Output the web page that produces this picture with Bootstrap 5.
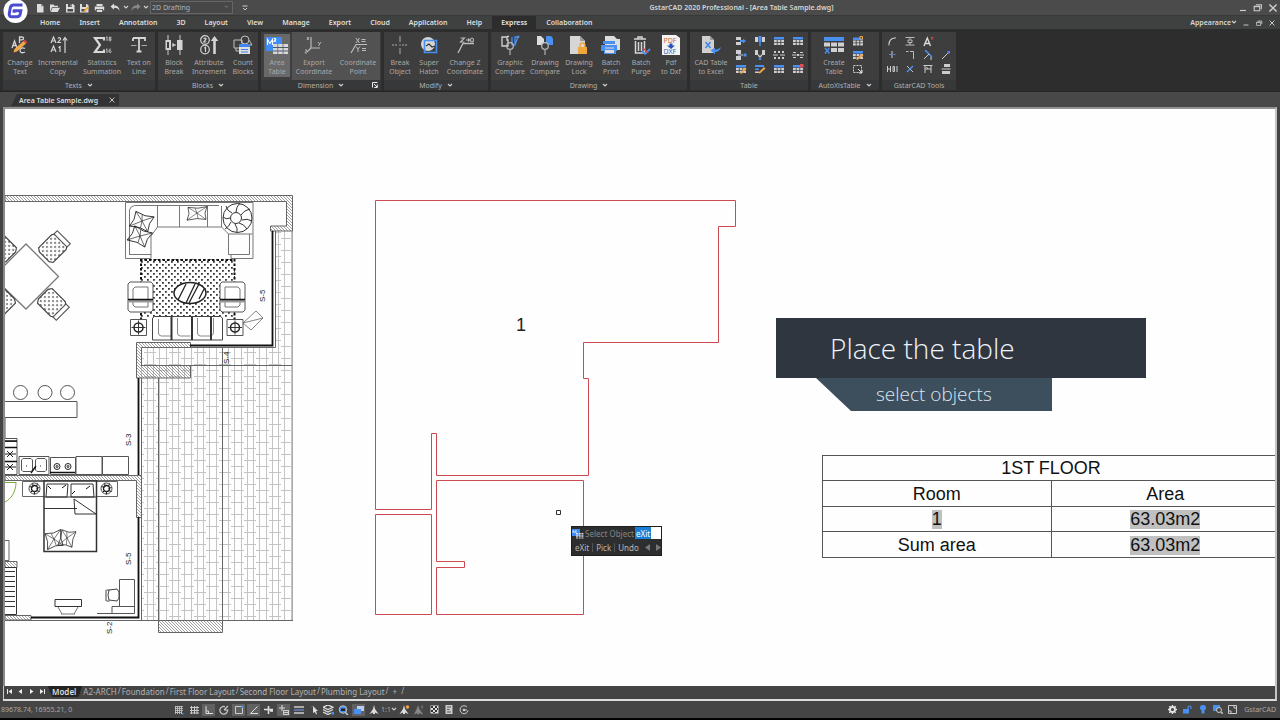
<!DOCTYPE html>
<html lang="en">
<head>
<meta charset="utf-8">
<meta name="viewport" content="width=device-width, initial-scale=1">
<title>GstarCAD 2020 Professional - [Area Table Sample.dwg]</title>
<link rel="stylesheet" href="https://cdn.jsdelivr.net/npm/bootstrap@5.3.0/dist/css/bootstrap.min.css">
<style>
:root{--ui:"Noto Sans","Open Sans",sans-serif;--cad:"Liberation Sans",Arial,sans-serif;--lite:#d6d6d6}
body{height:100vh;overflow:hidden;background:#444;color:var(--lite);font-family:var(--ui);font-size:7px;line-height:9px}
svg{display:block;flex:none}
button,select,input{font-family:inherit;line-height:9px}
.tool{border:0;background:none;padding:0;color:inherit;font-size:7px;display:flex;align-items:center;justify-content:center}
/* title and menu */
.titlebar{height:16px;background:#4a4b4a;border-bottom:1px solid #383838;padding-left:32px}
.logo{left:3px;top:-1px;z-index:3}
.q15{width:15px;height:15px}.q12{width:12px;height:15px}.q8{width:8px;height:15px}
.workspace{width:83px;height:13px;border:1px solid #656565;border-radius:0;background:#474747;color:#b4b4b4;font-size:7px;padding:0 1px;appearance:none}
.ws-box{position:relative}.ws-box svg{position:absolute;right:4px;top:4px;pointer-events:none}
.app-title{font-weight:600;font-size:7px}
.menubar{height:13px;background:#3f4040;padding-left:31px;font-weight:600;gap:1px}
.menubar .nav-link{padding:2px 9px;color:#dedede;height:13px}
.menubar .nav-link.active{background:#2d2d2d;color:#e6e6e6}
/* ribbon */
.ribbon{height:63px;background:#2d2d2d;padding:3px 3px 0;gap:3px;border-bottom:1px solid #262626}
.panel{background:#3e3e3e;height:58px;display:flex;flex-direction:column}
.panel-main{height:48px;padding:0 1px;display:flex}
.panel-cap{height:10px;background:#373839;color:#b0b0b0;display:flex;align-items:center;justify-content:center;gap:5px;position:relative}
.big{flex-direction:column;justify-content:flex-start;gap:3px;padding-top:3px;color:#a8a8a8;text-align:center;white-space:nowrap}
.w28{width:28px}.w30{width:30px}.w32{width:32px}.w34{width:34px}.w36{width:36px}.w40{width:40px}.w44{width:44px}
.chosen{background:linear-gradient(#696969,#696969) center 2px/26px 43px no-repeat}
.hot{background:#525252}
.minis{display:grid;grid-auto-columns:18px;grid-template-rows:repeat(3,14px);grid-auto-flow:row;padding-top:2px}
.minis.c4{grid-template-columns:repeat(4,18px)}
.minis.c4.wide{grid-template-columns:repeat(4,19px)}
.auto-main{padding:0 12px 0 8px}
.launch{position:absolute;right:3px;top:2px}
/* document tabs */
.docbar{height:15px;background:#484848;padding:2px 8px 0 11px}
.doc-tab{height:12px;padding:0 3px 0 8px;gap:10px;background:#333;color:#dcdcdc;font-weight:600;clip-path:polygon(6px 0,100% 0,100% 100%,0 100%)}
/* drawing area */
.frame{margin:0 3px 0 3px;border-right:2px solid #c4c4c4;border-bottom:2px solid #dcdcdc;border-top:2px solid #929292;min-height:0}
.sheet{background:#fefefe;border-left:2px solid #8a8a8a;overflow:hidden;min-height:0}
.plan{width:100%;height:100%;position:absolute;left:0;top:0}
.plan text{font-family:var(--cad)}
.banner{left:771px;top:209px;width:370px}
.banner-a{height:60px;background:#303640;color:#eef4fa;font:300 28px/60px "Open Sans","Noto Sans",sans-serif;padding-left:54px}
.banner-b{height:33px;width:236px;margin-left:40px;background:#3d4e5d;color:#dbe6f0;font:300 19px/33px "Open Sans","Noto Sans",sans-serif;padding-left:60px;clip-path:polygon(0 0,100% 0,100% 100%,35px 100%)}
.area-table{left:817px;top:346px;width:458px;font:18px/24px var(--cad);color:#111;border-collapse:collapse;table-layout:fixed;text-align:center}
.area-table th,.area-table td{border:1px solid #555;padding:0;height:25px;font-weight:400}
.area-table tr:nth-child(even) td,.area-table tr:nth-child(even) th{height:26px}
.fld{background:#c0c0c0;display:inline-block;line-height:19px}
.prompt{left:566px;top:417px;width:91px;background:#2d2e30;border:1px solid #1f1f1f}
.prompt-row{height:14px;font-size:8px;padding-bottom:2px}
.prompt-row label{color:#858585}
.prompt input{width:26px;height:12px;border:0;border-radius:0;padding:0 1px;font-size:8px;color:#fff;background:linear-gradient(90deg,#1a7fd6 16px,#fff 16px)}
.prompt .tool{font-size:8px;color:#b8b8b8;padding:0 3px;border-right:1px solid #555}
.prompt .tool.arrow{border:0;padding:0 3px}
/* layout tabs and status bar */
.layouts{height:13px;background:#444;color:#b2b2b2;font-size:8px;border-left:1px solid #c8c8c8}
.layouts .nav-link{padding:0 1px;height:11px;line-height:11px;color:#b2b2b2;font-size:8px}
.layouts .nav-link.active{background:#242424;color:#ddd;font-weight:600;clip-path:polygon(0 0,100% 0,calc(100% - 4px) 100%,4px 100%);padding:0 6px 0 4px}
.w11{width:11px}
.status{height:19px;background:#454545;border-bottom:2px solid #000;color:#a8a8a8}
.coords{width:171px;padding-left:1px;font-size:7px}
.st{width:15px;height:14px;margin:0}
.st.on{background:#616161;box-shadow:inset 0 0 0 1px #454545}
</style>
</head>
<body class="d-flex flex-column">

<svg width="0" height="0" class="position-absolute" aria-hidden="true">
  <defs>
    <symbol id="chev" viewBox="0 0 6 5"><path d="M1 1l2 2 2-2" fill="none" stroke="#ccc" stroke-width="1.2"/></symbol>
    <symbol id="min" viewBox="0 0 10 10"><path d="M2 7.5h6" stroke="#ccc" stroke-width="1.2"/></symbol>
    <symbol id="max" viewBox="0 0 10 10"><path d="M2 4h5v4H2zM3.500 2.500h5v4" fill="none" stroke="#ccc" stroke-width="1"/><path d="M2 4.200h5" stroke="#ccc"/></symbol>
    <symbol id="cls" viewBox="0 0 10 10"><path d="M2 2l6 6M8 2l-6 6" stroke="#ccc" stroke-width="1.200"/></symbol>
    <symbol id="tbl" viewBox="0 0 12 10"><path d="M1 1h10v2.500H1z" fill="#4a90f0"/><path d="M1 4h2.800v2H1zM4.600 4h2.800v2H4.600zM8.200 4H11v2H8.200zM1 6.800h2.800V9H1zM4.600 6.800h2.800V9H4.600zM8.200 6.800H11V9H8.200z" fill="#cfcfcf"/></symbol>
  </defs>
</svg>

<header class="position-relative">
  <svg class="logo position-absolute" width="25" height="25" viewBox="0 0 25 25" role="img" aria-label="GstarCAD"><circle cx="12.500" cy="12" r="12" fill="#fff"/><path d="M19.500 6H10.500c-2 0-2.800.8-3.200 2.800l-1 5.700c-.4 2.300.5 3.300 2.500 3.300h5.200c1.800 0 2.800-.9 3.200-2.800l.6-3.200h-6.600l-.4 2" fill="none" stroke="#4c4cd0" stroke-width="3"/></svg>
  <div class="titlebar d-flex align-items-center">
    <button class="tool q15" aria-label="New"><svg width="10" height="10" viewBox="0 0 10 10"><path d="M2 1h4l2.500 2.500V9.500H2z" fill="#ddd"/><path d="M6 1v2.500h2.500z" fill="#999"/></svg></button>
    <button class="tool q15" aria-label="Open"><svg width="11" height="10" viewBox="0 0 11 10"><path d="M1 9V1.500h3.500l1 1.200H9V4H3.200z" fill="#ddd"/><path d="M3.600 4.800H11L8.700 9H1.800z" fill="#ddd"/></svg></button>
    <button class="tool q15" aria-label="Save"><svg width="10" height="10" viewBox="0 0 10 10"><path d="M1 1h7l1.500 1.500v7H1z" fill="#ddd"/><path d="M3 1h4v3H3zM2.500 6h5.500v2.500H2.500z" fill="#4a4b4a"/><path d="M5.500 1.500h1v2h-1z" fill="#ddd"/></svg></button>
    <button class="tool q15" aria-label="Save as"><svg width="11" height="10" viewBox="0 0 11 10"><path d="M1 1h7l1.500 1.500v7H1z" fill="#ddd"/><path d="M3 1h4v3H3zM2.500 6h4v2.500h-4z" fill="#4a4b4a"/><path d="M4.500 9l.5-2 4-3.500 1.200 1.300-4 3.700z" fill="#f2a43a"/></svg></button>
    <button class="tool q15" aria-label="Print"><svg width="11" height="10" viewBox="0 0 11 10"><path d="M2.500 1h6v2h-6zM.8 3.500h9.400v3.700H9V6H2v1.200H.8zM2.800 6.700h5.400V9H2.800z" fill="#ddd"/></svg></button>
    <button class="tool q15" aria-label="Undo"><svg width="10" height="9" viewBox="0 0 10 9"><path d="M.5 3.500L4 .5v2c3.500 0 5.500 2 5.500 5.500C8.500 5.500 7 4.800 4 4.800v2z" fill="#ddd"/></svg></button>
    <button class="tool q8" aria-label="Undo list"><svg width="6" height="5"><use href="#chev"/></svg></button>
    <button class="tool q12" aria-label="Redo"><svg width="10" height="9" viewBox="0 0 10 9"><path d="M9.500 3.500L6 .5v2C2.500 2.500.5 4.500.5 8 1.500 5.500 3 4.800 6 4.800v2z" fill="#8a8a8a"/></svg></button>
    <button class="tool q8" aria-label="Redo list"><svg width="6" height="5"><use href="#chev"/></svg></button>
    <div class="ws-box"><select class="workspace d-block" aria-label="Workspace"><option>2D Drafting</option></select><svg width="5" height="4" opacity=".4"><use href="#chev"/></svg></div>
    <button class="tool q15 ms-1" aria-label="Customize toolbar"><svg width="6" height="6" viewBox="0 0 6 6"><path d="M.5 1h5M1 3l2 2 2-2" fill="none" stroke="#ccc"/></svg></button>
    <div class="app-title flex-grow-1 text-center pe-1">GstarCAD 2020 Professional - [Area Table Sample.dwg]</div>
    <button class="tool q15" aria-label="Minimize"><svg width="10" height="10"><use href="#min"/></svg></button>
    <button class="tool q15" aria-label="Restore"><svg width="11" height="11"><use href="#max"/></svg></button>
    <button class="tool q15" aria-label="Close"><svg width="12" height="12"><use href="#cls"/></svg></button>
  </div>
  <nav class="menubar d-flex align-items-center">
    <a class="nav-link" href="#">Home</a><a class="nav-link" href="#">Insert</a><a class="nav-link" href="#">Annotation</a><a class="nav-link" href="#">3D</a><a class="nav-link" href="#">Layout</a><a class="nav-link" href="#">View</a><a class="nav-link" href="#">Manage</a><a class="nav-link" href="#">Export</a><a class="nav-link" href="#">Cloud</a><a class="nav-link" href="#">Application</a><a class="nav-link" href="#">Help</a><a class="nav-link active" href="#" aria-current="page">Express</a><a class="nav-link" href="#">Collaboration</a>
    <button class="tool ms-auto fw-semibold">Appearance<svg width="6" height="5"><use href="#chev"/></svg></button>
    <button class="tool q8 ms-1" aria-label="Minimize drawing"><svg width="8" height="8"><use href="#min"/></svg></button>
    <button class="tool q8 ms-1" aria-label="Restore drawing"><svg width="8" height="8"><use href="#max"/></svg></button>
    <button class="tool q8 ms-1 me-1" aria-label="Close drawing"><svg width="8" height="8"><use href="#cls"/></svg></button>
  </nav>
</header>

<section class="ribbon d-flex" aria-label="Express tools">
  <div class="panel">
    <div class="panel-main">
      <button class="tool big w32"><svg width="20" height="20" viewBox="0 0 20 20"><g fill="none" stroke="#d4d4d4" stroke-width="1.300"><path d="M2 13l2.500-7L7 13M3 10.500h3M9.500 8V2h2.300c2.400 0 2.400 2.800 0 2.800H9.500M15 13.500c-3-1.500-5 0-5 2s2.500 3 5 1.500"/></g><path d="M3.500 17.500l1-3.500 9-8 2.500 2.500-9 8z" fill="#f2a84a"/><path d="M13.500 6l1.500-1.300 2.500 2.500L16 8.500z" fill="#e04040"/></svg><span>Change<br>Text</span></button>
      <button class="tool big w44"><svg width="20" height="20" viewBox="0 0 20 20"><g fill="none" stroke="#d4d4d4" stroke-width="1.200"><path d="M3 8l2.500-6L8 8M4 6h3M3 17l2.500-6L8 17M4 15h3M10 3.500c1-1.500 3-.8 2.500.8L10 7.500h3.200M10.500 12.500l1.500-1V17M17 18V3M14.800 5.500L17 2.500l2.200 3"/></g></svg><span>Incremental<br>Copy</span></button>
      <button class="tool big w44"><svg width="20" height="20" viewBox="0 0 20 20"><path d="M12 5.500V3H3l5 7-5 7h9v-2.500" fill="none" stroke="#d8d8d8" stroke-width="2.200"/><path d="M14 2.500l1-.8V6M18 2a1 1 0 1 0 .1 0M18 4a1 1 0 1 0 .1 0M14 14.500l1-.8V18M18.800 14c-1.300-.5-1.800.8-1.800 2.500 0 1.600 2.200 1.500 2.200.1 0-1.200-1.700-1.300-2.200-.2" fill="none" stroke="#ccc" stroke-width=".9"/></svg><span>Statistics<br>Summation</span></button>
      <button class="tool big w30"><svg width="20" height="20" viewBox="0 0 20 20"><path d="M4 3h12v3M4 6V3M10 3v13M7.500 16.500h5" fill="none" stroke="#d4d4d4" stroke-width="1.800"/><path d="M2 10.500h5.500M12.500 10.500H18" stroke="#aaa"/></svg><span>Text on<br>Line</span></button>
    </div>
    <div class="panel-cap">Texts <svg width="6" height="5"><use href="#chev"/></svg></div>
  </div>

  <div class="panel">
    <div class="panel-main">
      <button class="tool big w30"><svg width="20" height="20" viewBox="0 0 20 20"><path d="M4 0v20M16 0v20M8 10h4" stroke="#ccc"/><path d="M1.500 5H7v10H1.500zM13 5h5.500v10H13z" fill="#d4d4d4"/><path d="M3 7h2v6H3z" fill="#3e3e3e"/><path d="M8.500 7.500v5l2.500-2.500z" fill="#ccc"/></svg><span>Block<br>Break</span></button>
      <button class="tool big w40"><svg width="20" height="20" viewBox="0 0 20 20"><g fill="none" stroke="#d4d4d4" stroke-width="1.200"><circle cx="6" cy="5" r="4.300"/><circle cx="6" cy="14.500" r="4.300"/><path d="M4.800 4c.5-1.500 2.500-1 2.200.2L4.800 7h2.600M5.300 13.200l1.200-.9V17"/></g><path d="M15.500 1l3.800 5h-2.500v13h-2.600V6h-2.500z" fill="#d4d4d4"/></svg><span>Attribute<br>Increment</span></button>
      <button class="tool big w28"><svg width="20" height="20" viewBox="0 0 20 20"><path d="M1 5h8v8H1zM3 13v3h3" fill="none" stroke="#c0c0c0"/><circle cx="12" cy="5" r="4" fill="none" stroke="#c0c0c0"/><path d="M16 5l3 5h-3" fill="none" stroke="#c0c0c0"/><path d="M6 9h11v10H6z" fill="#ddd"/><path d="M6 9h11v3H6zM8 14h7v1H8zM8 16.500h7v1H8z" fill="#3f86ec"/></svg><span>Count<br>Blocks</span></button>
    </div>
    <div class="panel-cap">Blocks <svg width="6" height="5"><use href="#chev"/></svg></div>
  </div>

  <div class="panel">
    <div class="panel-main">
      <button class="tool big w30 chosen" aria-pressed="true"><svg width="22" height="20" viewBox="0 0 22 20"><path d="M0 2h16v14H0z" fill="#3f8cf5"/><path d="M1.500 10V4.500L4 8.500l2.500-4V10M8 4c.5-1 2-.6 1.700.4L8 6.300h2" fill="none" stroke="#fff" stroke-width="1.100"/><path d="M7 9h15v10H7z" fill="#4d5a6e"/><g fill="#d8d8d8"><path d="M7 9h4.500v3H7zM12.200 9h4.500v3h-4.500zM17.400 9H22v3h-4.600zM7 13h4.500v2.500H7zM12.200 13h4.500v2.500h-4.500zM17.400 13H22v2.500h-4.600zM7 16.500h4.500V19H7zM12.200 16.500h4.500V19h-4.500zM17.400 16.500H22V19h-4.600z"/></g></svg><span>Area<br>Table</span></button>
      <button class="tool big w44 hot"><svg width="20" height="20" viewBox="0 0 20 20"><path d="M7 2v11h9M7 13l-4 4" fill="none" stroke="#b8b8b8" stroke-width="1.200"/><path d="M3 2l2 3M5 2L3 5M14 7l1.500 2M17 7l-2.500 4M1 15h2l-2 3h2" fill="none" stroke="#bbb" stroke-width=".9"/></svg><span>Export<br>Coordinate</span></button>
      <button class="tool big w44 hot"><svg width="20" height="20" viewBox="0 0 20 20"><path d="M3 18L8 9.500h11" fill="none" stroke="#bdbdbd" stroke-width="1.200"/><path d="M8 3l3.500 5M11.500 3L8 8M13.500 4.500h4M13.500 6.500h4M8 11.500l2 2.500 2-2.500M10 14v3M14 13.500h4M14 15.500h4" fill="none" stroke="#bdbdbd"/></svg><span>Coordinate<br>Point</span></button>
    </div>
    <div class="panel-cap">Dimension <svg width="6" height="5"><use href="#chev"/></svg><button class="tool launch" aria-label="Dimension settings"><svg width="6" height="6" viewBox="0 0 6 6"><path d="M.5 5.500v-5h5M2 2l3 3M5.300 2.500v3h-3" fill="none" stroke="#eee"/></svg></button></div>
  </div>

  <div class="panel">
    <div class="panel-main">
      <button class="tool big w30"><svg width="20" height="20" viewBox="0 0 20 20"><path d="M10 1v6M10 13v6" stroke="#aaa"/><path d="M2 10h6M12 10h6" stroke="#aaa" stroke-dasharray="2 1"/><path d="M9.500 9.500h1v1h-1z" fill="#ddd"/></svg><span>Break<br>Object</span></button>
      <button class="tool big w28"><svg width="20" height="20" viewBox="0 0 20 20"><circle cx="9" cy="9" r="7" fill="#d6d6d6"/><path d="M5.500 5.500h12v12h-12z" fill="none" stroke="#4a90f0" stroke-width="1.600"/><path d="M7 11l3-2 3 3 3-1" fill="none" stroke="#333" stroke-width="1.100"/></svg><span>Super<br>Hatch</span></button>
      <button class="tool big w44"><svg width="20" height="20" viewBox="0 0 20 20"><path d="M3 18L8 8.500h11" fill="none" stroke="#bdbdbd" stroke-width="1.300"/><path d="M5.500 3h4l-4 4h4M11 5h3M13 3.500L14.500 5 13 6.500M17 3c-2 0-2 4 0 4s2-4 0-4" fill="none" stroke="#bdbdbd" stroke-width="1.100"/></svg><span>Change Z<br>Coordinate</span></button>
    </div>
    <div class="panel-cap">Modify <svg width="6" height="5"><use href="#chev"/></svg></div>
  </div>

  <div class="panel">
    <div class="panel-main">
      <button class="tool big w36"><svg width="20" height="20" viewBox="0 0 20 20"><path d="M2 2h5v3h1v6H2zM7 1.500h2" fill="none" stroke="#d4d4d4" stroke-width="1.300"/><path d="M12 2v8h3l3-8h-3v8" fill="none" stroke="#4a90f0" stroke-width="1.300"/><path d="M17 .7h2.300V3H17z" fill="#4a90f0"/><circle cx="10" cy="11" r="3.300" fill="none" stroke="#bbb" stroke-width="1.200"/><path d="M10 14.500V20" stroke="#999" stroke-width="1.500"/></svg><span>Graphic<br>Compare</span></button>
      <button class="tool big w34"><svg width="20" height="20" viewBox="0 0 20 20"><path d="M2 1h4l3 3v6H2z" fill="#ddd"/><path d="M11 1h5l2 2.500V10h-7z" fill="#4a90f0"/><circle cx="10" cy="11" r="3.300" fill="#3e3e3e" stroke="#bbb" stroke-width="1.200"/><path d="M10 14.500V20" stroke="#999" stroke-width="1.500"/></svg><span>Drawing<br>Compare</span></button>
      <button class="tool big w34"><svg width="20" height="20" viewBox="0 0 20 20"><path d="M1 1h10l5 5v13H1z" fill="#d6d6d6"/><path d="M11 1v5h5z" fill="#999"/><path d="M9 12h9v7H9z" fill="#f0a83c"/><path d="M11 12v-1.500a2.500 2.500 0 0 1 5 0V12" fill="none" stroke="#f0a83c" stroke-width="1.300"/></svg><span>Drawing<br>Lock</span></button>
      <button class="tool big w30"><svg width="20" height="20" viewBox="0 0 20 20"><path d="M4 1h9l3 3h3v11H4z" fill="#ddd"/><path d="M2 6h12v3H2zM0 10h16v6H0zM3 16h12v3H3z" fill="#4a90f0"/><path d="M4 12.500h9v1H4zM4 15h9v3H4z" fill="#ddd"/></svg><span>Batch<br>Print</span></button>
      <button class="tool big w30"><svg width="20" height="20" viewBox="0 0 20 20"><path d="M3 4h12M7 4V2h4v2M4.500 6v12h9V6M7.500 7v9M10.500 7v9" fill="none" stroke="#d6d6d6" stroke-width="1.500"/><path d="M11 16l3 3 5-5" fill="none" stroke="#4a90f0" stroke-width="1.800"/><path d="M12 13l5 5" stroke="#e04848" stroke-width="1.300"/></svg><span>Batch<br>Purge</span></button>
      <button class="tool big w30"><svg width="20" height="20" viewBox="0 0 20 20"><path d="M1 0h14l4 3v17H1z" fill="#f4f4f4"/><text x="2.500" y="8" font-size="7" fill="#d06a3a">PDF</text><path d="M8.500 8.500h3v2H14L10 14l-4-3.500h2.500z" fill="#2a50b8"/><text x="2.500" y="19" font-size="7" fill="#3a64b8">DXF</text></svg><span>Pdf<br>to Dxf</span></button>
    </div>
    <div class="panel-cap">Drawing <svg width="6" height="5"><use href="#chev"/></svg></div>
  </div>

  <div class="panel">
    <div class="panel-main">
      <button class="tool big w40"><svg width="20" height="20" viewBox="0 0 20 20"><path d="M1 1h8l4 4v13H1z" fill="#d0d0d0"/><path d="M9 1v4h4z" fill="#999"/><path d="M4.500 7l5 6M9.500 7l-5 6" stroke="#3f86ec" stroke-width="1.500"/><path d="M20 12c-1 4-4 5-6 5v2.200L9.500 15.500 14 12.500v2c2 0 4-.5 6-2.500z" fill="#4a90f0"/></svg><span>CAD Table<br>to Excel</span></button>
      <div class="minis c4 wide">
        <button class="tool" aria-label="Insert column left"><svg width="12" height="10" viewBox="0 0 12 10"><path d="M1 1h5v3H1zM1 6h5v3H1z" fill="#cfcfcf"/><path d="M5 4h3V2.500L11 5 8 7.500V6H5z" fill="#4a90f0"/></svg></button>
        <button class="tool" aria-label="Insert row above"><svg width="12" height="10" viewBox="0 0 12 10"><path d="M1 1h3v5H1zM8 1h3v5H8z" fill="#cfcfcf"/><path d="M4.500 0h3v6H6.700v4H5.300V6h-.8z" fill="#4a90f0"/></svg></button>
        <button class="tool" aria-label="Table cells"><svg width="12" height="10"><use href="#tbl"/></svg></button>
        <button class="tool" aria-label="Table rows"><svg width="12" height="10"><use href="#tbl"/></svg></button>
        <button class="tool" aria-label="Insert column right"><svg width="12" height="10" viewBox="0 0 12 10"><path d="M1 0h5v4H1zM1 6h5v4H1z" fill="#cfcfcf"/><path d="M3 4.500h5v1H3z" fill="#cfcfcf"/><path d="M8.500 3.500h3v3h-3z" fill="#4a90f0"/></svg></button>
        <button class="tool" aria-label="Insert row below"><svg width="12" height="10" viewBox="0 0 12 10"><path d="M1 0h3v5H1zM8 0h3v5H8zM4 4l2 2 2-2v2L6.500 7.500h-1L4 6z" fill="#cfcfcf"/><path d="M4.800 7.500h2.400V10H4.800z" fill="#4a90f0"/></svg></button>
        <button class="tool" aria-label="Split table"><svg width="12" height="10" viewBox="0 0 12 10"><path d="M1 1h2v2H1zM5 1h2v2H5zM9 1h2v2H9zM1 7h2v2H1zM5 7h2v2H5zM9 7h2v2H9zM0 4.500h5v1H0zM7 4.500h5v1H7z" fill="#cfcfcf"/></svg></button>
        <button class="tool" aria-label="Merge table"><svg width="12" height="10" viewBox="0 0 12 10"><path d="M1 2h3v1H1zM8 2h3v1H8zM1 7h3v1H1zM8 7h3v1H8zM0 4.500h4.500v1H0zM7.500 4.500H12v1H7.500zM5 4h2v2H5z" fill="#cfcfcf"/></svg></button>
        <button class="tool" aria-label="Edit table"><svg width="12" height="10" viewBox="0 0 12 10"><use href="#tbl"/><path d="M5 9l5-5.500 1.500 1.500-5 5z" fill="#f2a84a"/></svg></button>
        <button class="tool" aria-label="Edit table text"><svg width="12" height="10" viewBox="0 0 12 10"><path d="M1 1h9v2H1zM1 4.500h4v1.500H1z" fill="#4a90f0"/><path d="M1 7.500h4V9H1z" fill="#ccc"/><path d="M4 9l6-6 1.500 1.500-5.500 5z" fill="#f2a84a"/></svg></button>
        <button class="tool" aria-label="Table style"><svg width="12" height="10"><use href="#tbl"/></svg></button>
        <button class="tool" aria-label="Delete row"><svg width="12" height="10" viewBox="0 0 12 10"><use href="#tbl"/><path d="M8 0h3.500v3.500H8z" fill="#e05050"/></svg></button>
      </div>
    </div>
    <div class="panel-cap">Table</div>
  </div>

  <div class="panel">
    <div class="panel-main auto-main">
      <button class="tool big w30"><svg width="20" height="20" viewBox="0 0 20 20"><path d="M0 2h20v4H0z" fill="#4a90f0"/><path d="M0 7.500h6v4H0zM7 7.500h6v4H7zM14 7.500h6v4h-6zM7 13h6v4H7zM14 13h6v4h-6z" fill="#d0d0d0"/><path d="M1 13l4.500 5.500M5.500 13L1 18.500" stroke="#4a90f0" stroke-width="1.400"/></svg><span>Create<br>Table</span></button>
      <div class="minis">
        <button class="tool" aria-label="New linked table"><svg width="12" height="11" viewBox="0 0 12 10"><use href="#tbl"/><path d="M8 0h2.500v2.500H8z" fill="#3e3e3e" stroke="#f2a84a"/></svg></button>
        <button class="tool" aria-label="Edit linked table"><svg width="12" height="10" viewBox="0 0 12 10"><use href="#tbl"/><path d="M4 9l6-5 1.500 1.500-6 4.500z" fill="#f2a84a"/></svg></button>
        <button class="tool" aria-label="Select table region"><svg width="12" height="10" viewBox="0 0 12 10"><path d="M1.500 1.500h8v7h-8z" fill="none" stroke="#ccc" stroke-dasharray="2 1"/><path d="M6 5l4 4M10 6v3H7" fill="none" stroke="#ddd"/></svg></button>
      </div>
    </div>
    <div class="panel-cap">AutoXlsTable <svg width="6" height="5"><use href="#chev"/></svg></div>
  </div>

  <div class="panel">
    <div class="panel-main">
      <div class="minis c4">
        <button class="tool" aria-label="Arc"><svg width="10" height="10" viewBox="0 0 10 10"><path d="M2 9c0-4 2-7 6-7" fill="none" stroke="#ccc" stroke-width="1.200"/><path d="M1 7.500h2v2H1zM7 1h2v2H7z" fill="#888"/></svg></button>
        <button class="tool" aria-label="Spacing"><svg width="10" height="10" viewBox="0 0 10 10"><path d="M.5 1.500h9M.5 9h9M3 4h4v2.500H3zM5 1.500v2M5 6.500V9" fill="none" stroke="#bbb"/></svg></button>
        <button class="tool" aria-label="Text height"><svg width="11" height="11" viewBox="0 0 11 11"><path d="M1 10L4.300 2 7.500 10M2.200 7.500h4.200" fill="none" stroke="#ddd" stroke-width="1.400"/><path d="M9 4V1M8 2l1-1 1.500 1" fill="none" stroke="#e04848"/></svg></button>
        <span></span>
        <button class="tool" aria-label="Break at point"><svg width="10" height="10" viewBox="0 0 10 10"><path d="M5 1v7" stroke="#ccc"/><path d="M2 4.500h2M6.500 4.500h2" stroke="#4a90f0"/></svg></button>
        <button class="tool" aria-label="Corner"><svg width="10" height="10" viewBox="0 0 10 10"><path d="M1 1.500h2.500M5 1.500h3.500V9" fill="none" stroke="#bbb"/></svg></button>
        <button class="tool" aria-label="Extend"><svg width="10" height="10" viewBox="0 0 10 10"><path d="M2 0l7 7" stroke="#4a90f0" stroke-width="1.500"/><path d="M1 9l5-5M8 7v3" stroke="#ccc"/></svg></button>
        <button class="tool" aria-label="Line"><svg width="10" height="10" viewBox="0 0 10 10"><path d="M1 9l6-6" stroke="#ccc"/><path d="M6.500 1H9v2.500H6.500z" fill="#5b7cf0"/></svg></button>
        <button class="tool" aria-label="Numbering"><svg width="11" height="8" viewBox="0 0 11 8"><path d="M.5 1v6M3.500 1v6M.5 4h3M6 1.500v5M7.500 1.500v5M10 1v6M6 1.500h1.500M6 6.500h1.500" fill="none" stroke="#ccc"/></svg></button>
        <button class="tool" aria-label="Delete"><svg width="10" height="10" viewBox="0 0 10 10"><path d="M2 2l6 6" stroke="#ccc"/><path d="M8 2L2 8" stroke="#4a90f0" stroke-width="1.400"/></svg></button>
        <button class="tool" aria-label="Frame"><svg width="10" height="10" viewBox="0 0 10 10"><path d="M.5 1.500h9M2 1.500V9M8 1.500V9M2 5h6M3.500 3l1.500 2" fill="none" stroke="#ccc"/></svg></button>
        <button class="tool" aria-label="Stack"><svg width="10" height="10" viewBox="0 0 10 10"><path d="M3 0h6v3H3zM1 7h8v3H1z" fill="#ccc"/><path d="M.5 5h9" stroke="#ccc"/></svg></button>
      </div>
    </div>
    <div class="panel-cap">GstarCAD Tools</div>
  </div>
</section>

<div class="docbar d-flex">
  <div class="doc-tab d-flex align-items-center"><span>Area Table Sample.dwg</span><button class="tool" aria-label="Close tab"><svg width="8" height="8"><use href="#cls"/></svg></button></div>
</div>

<main class="frame d-flex flex-column flex-grow-1">
  <div class="sheet position-relative flex-grow-1">
    <svg class="plan" role="img" aria-label="Floor plan with room outlines">
      <defs>
        <pattern id="hat" width="3" height="3" patternUnits="userSpaceOnUse"><path d="M-1-1l5 5M-1 2l2 2M2-1l2 2" stroke="#777" stroke-width=".7"/></pattern>
        <pattern id="tiles" width="25" height="12" patternUnits="userSpaceOnUse" x="141" y="352"><path d="M.5 0v12M6.500 0v12M12.500 0v12M18.500 0v12M3 .5h12M15 6.500h10M0 6.500h3" fill="none" stroke="#c4c4c4"/></pattern>
        <pattern id="dot" width="6" height="6" patternUnits="userSpaceOnUse"><path d="M0 0h1.800v1.800H0zM3 3h1.800v1.800H3z" fill="#333"/></pattern>
        <pattern id="dot2" width="5" height="5" patternUnits="userSpaceOnUse"><path d="M0 0h1.300v1.300H0zM2.500 2.500h1.300v1.300H2.500z" fill="#222"/></pattern>
        <g id="dchair"><path d="M-10-9h16l3 2v14l-3 2h-16l-2-3V-6z" fill="url(#dot2)" stroke="#444"/><path d="M8-8h4V8H8z" fill="#fff" stroke="#555"/></g>
        <g id="pot" fill="none" stroke="#222"><circle r="5.500" stroke-width=".8"/><circle r="3" stroke-width="1.300"/><path d="M-5-2l3 1M-2-5l1 3M3-5l-1 3M5-1L2 0M5 3L2 2M0 6V3M-4 4l2-2"/></g>
        <g id="lamp"><path d="M-8-8H8V8H-8z" fill="#fff" stroke="#555"/><circle r="4.500" fill="none" stroke="#222" stroke-width="1.500"/><path d="M-7 0H7M0-7V7" stroke="#333"/></g>
        <g id="arm"><path d="M-9-15h21l2 2v26l-2 2h-21l-2-2v-26z" fill="#fff" stroke="#555"/><path d="M-6-8l2-2H9v20H-4l-2-2z" fill="none" stroke="#777"/><path d="M-11 3h25v2.500h-25z" fill="#999"/><path d="M-11 2.500h25" stroke="#111" stroke-width="1.500"/></g>
        <g id="pil" fill="none" stroke="#222" stroke-width=".8"><path d="M-9-7l10 1 9-2-2 8 1 8-9-1-10 2 2-8z"/><path d="M-9-7L0 0l10-8M0 0l9 8M0 0l-10 9M0 0l-2-6M0 0l1 7" stroke-width=".6"/></g>
      </defs>
      <g transform="translate(-5 -109)">
        <!-- deck -->
        <path d="M275 231h18v389H141V347h134z" fill="url(#tiles)"/>
        <path d="M141 365.500h152" stroke="#666" fill="none"/><path d="M292.500 231v389" stroke="#aaa"/>
        <path d="M222.500 347v273M158.500 378v242" stroke="#666"/>
        <!-- walls -->
        <g fill="url(#hat)" stroke="#666">
          <path d="M5 195.500h287.500v35.500h-22v-5h16v-24.500H5z"/>
          <path d="M136.500 342.500h54v5h-49v18h49v12.500h-54z"/>
          <path d="M5 475.500h136.500v42h-5v-37H5zM5 561.500h12v6H5zM5 615.500h26v4.500H5zM158.500 620.500h64v12h-64z"/>
        </g>
        <path d="M272.500 231v114.500H190M138.500 378v97M138.500 517v100.500H31" fill="none" stroke="#111" stroke-width="1.800"/>
        <path d="M275.500 231v116.500H190M141.500 378v97M141.500 517v103M5 620.500h288" fill="none" stroke="#666"/>
        <!-- sofa -->
        <g fill="none" stroke="#777">
          <path d="M125.500 202.500h127.500v56h-22v-4M151 254v4.500h-25.500v-56"/>
          <path d="M129.500 254V210q1-4 5-4.500h84.500M157.500 206v21h64v-21M179.500 206v21M207.500 206v21M151 254.500V236l6.500-9M221.500 227l7 7h24M228.500 234v20.500h21V234M129 254.500h22"/>
          <circle cx="237.500" cy="218" r="14.500" stroke="#333"/><circle cx="236" cy="218" r="5.500" stroke="#333"/>
          <path d="M236 212q0-5 4-9M241 215q3-5 9-6M242 220q5-2 10 1M239 223q5 1 8 6M235 224q3 4 2 9M231 222q-2 5-6 7M230 218q-4 2-7-1M232 213q-5-2-6-7" stroke="#333"/>
        </g>
        <use href="#pil" transform="translate(197 213) scale(1 .8)"/>
        <use href="#pil" transform="translate(142 221) rotate(20)"/><use href="#pil" transform="translate(140 236) rotate(25)"/>
        <!-- rug and seating -->
        <path d="M141 259h94v59h-94z" fill="url(#dot)"/>
        <path d="M140 260h95M141 259v62M234.500 259v62" stroke="#111" stroke-width="2" stroke-dasharray="2.500 2"/>
        <ellipse cx="190" cy="293" rx="16" ry="10.500" fill="#fff" stroke="#222" stroke-width="1.500"/>
        <path d="M178 300l8-16M186 303l9-19M189 303l10-19M199 299l5-10" stroke="#222" stroke-width="1.300"/>
        <use href="#arm" x="139" y="297"/><use href="#arm" transform="translate(234 297) scale(-1 1)"/>
        <path d="M152.500 318l2-1.500h66l2 1.500v22h-70z" fill="#fff" stroke="#444"/>
        <path d="M158.500 319v14q0 3 3 3h10M177.500 318v15q0 3 3 3h10M197.500 318v15q0 3 3 3h10q3-1 3-3v-15" fill="none" stroke="#888"/>
        <path d="M171.500 317v23M192 317v23M211 317v23" stroke="#333" stroke-width="2"/>
        <use href="#lamp" x="138.500" y="327.500"/><use href="#lamp" x="235" y="327.500"/>
        <path d="M243 323l13-12 7 7-12 12zM243 323l20-5" fill="none" stroke="#666" stroke-width=".8"/>
        <!-- dining -->
        <path d="M-7 277l33-33 32.500 32.500L26 309z" fill="#fff" stroke="#777" stroke-width="1.300"/>
        <use href="#dchair" transform="translate(54 247) rotate(-45) scale(1.15)"/><use href="#dchair" transform="translate(53 304) rotate(45) scale(1.15)"/>
        <use href="#dchair" transform="translate(1 247) rotate(225) scale(1.15)"/><use href="#dchair" transform="translate(0 304) rotate(135) scale(1.15)"/>
        <!-- kitchen -->
        <g fill="#fff" stroke="#555"><circle cx="20.500" cy="392.500" r="7"/><circle cx="45" cy="392.500" r="7"/><circle cx="67.500" cy="392.500" r="7"/>
          <path d="M4 401.500h73v16H4zM5 418v20M4 438.500h13v36H4zM4 441.500h13M19 456.500h30v18H19zM50.500 457.500h25v17h-25zM76 456.500h26v18H76zM102.500 456.500h26v18h-26z"/>
          <path d="M23 458.500h8l1.500 1.500v10l-1.500 1.500h-8l-1.500-1.500v-10zM37 458.500h8l1.500 1.500v10l-1.500 1.500h-8l-1.500-1.500v-10z"/></g>
        <path d="M4 441h13M4 447.500h13M4 461.500h13M50 472.500h25M31 473l5-7" stroke="#111" stroke-width="1.300"/>
        <g fill="none" stroke="#222"><circle cx="57" cy="466.500" r="3"/><circle cx="68" cy="466.500" r="3"/><circle cx="57" cy="466.500" r="1"/><circle cx="68" cy="466.500" r="1"/><path d="M7 451l6 6M13 451l-6 6M5 454h11M7 464l6 6M13 464l-6 6M5 467h11M26 466h1M40 466h1"/></g>
        <!-- bedroom -->
        <path d="M5 482.500h11M16 482c0 10-5 17-11 20" fill="none" stroke="#7fae3c"/>
        <path d="M22.500 481.500h95v15h-95z" fill="#fff" stroke="#666"/>
        <path d="M44 481h52.500v70.500H44z" fill="#fff" stroke="#333" stroke-width="1.500"/>
        <path d="M47 484h21l-1 13H46zM71 484h22l1 13H71zM44 497h52M44 508.500h33M74 499l22 15h-21z" fill="none" stroke="#333"/>
        <path d="M48 486l3 3M66 485l-4 3M90 486l-4 3M72 494l3-3" stroke="#111"/>
        <use href="#pot" x="34.500" y="488.500"/><use href="#pot" x="106.500" y="488.500"/>
        <use href="#pil" transform="translate(54 539) rotate(-12) scale(.85 1)"/><use href="#pil" transform="translate(67 538) rotate(12) scale(.75 1)"/>
        <path d="M4 540.500h5v20H4z" fill="none" stroke="#666"/>
        <path d="M5 567.500h11.500v47H5M5 571.500h10M5 576.500h10M5 581.500h10M5 586.500h10M5 591.500h10M5 596.500h10M5 601.500h10M5 606.500h10" fill="none" stroke="#333"/>
        <path d="M55 599.500h26.500v7H55z" fill="#fff" stroke="#333"/><path d="M58 607l4 7M78 607l-4 7M61 614h14" fill="none" stroke="#777"/>
        <path d="M119.500 606V579.500h15v34H97M134 606.500h-22v7" fill="none" stroke="#555"/>
        <path d="M109 590l8-1 2 3v6l-2 3-8-1q-2-5 0-10zM106 590v11M106.500 590h3M106.500 601h3" fill="#fff" stroke="#444"/>
        <g font-size="8" fill="#222">
          <text transform="translate(265 302) rotate(-90)">S-5</text><text transform="translate(229 364) rotate(-90)">S-4</text>
          <text transform="translate(131 446) rotate(-90)">S-3</text><text transform="translate(131 565) rotate(-90)">S-5</text><text transform="translate(112 634) rotate(-90)">S-2</text>
        </g>
        <!-- room outlines -->
        <g fill="none" stroke="#cc4a50">
          <path d="M375.500 200.500h360v26h-17v116h-135v36h5v97h-152v-42h-5v76h-56z"/>
          <path d="M375.500 514.500h56v100h-56zM436.500 480.500h147v134h-147v-47h28v-6h-28z"/>
        </g>
        <text x="516" y="331" font-size="18" fill="#222">1</text>
        <path d="M556.500 510.500h4v4h-4z" fill="#fff" stroke="#333"/>
      </g>
    </svg>

    <div class="banner position-absolute">
      <div class="banner-a">Place the table</div>
      <div class="banner-b">select objects</div>
    </div>

    <table class="area-table position-absolute">
      <tbody>
        <tr><th colspan="2">1ST FLOOR</th></tr>
        <tr><th>Room</th><th>Area</th></tr>
        <tr><td><span class="fld">1</span></td><td><span class="fld">63.03m2</span></td></tr>
        <tr><td>Sum area</td><td><span class="fld">63.03m2</span></td></tr>
      </tbody>
    </table>

    <form class="prompt position-absolute" onsubmit="return false">
      <div class="prompt-row d-flex align-items-center">
        <svg width="12" height="11" viewBox="0 0 12 11"><path d="M0 1h8v7H0z" fill="#3f8cf5"/><path d="M1 5V2.500l1.500 2 1.500-2V5" fill="none" stroke="#fff" stroke-width=".7"/><path d="M4 5h2v1.500H4zM6.700 5h2v1.500h-2zM9.400 5h2v1.500h-2zM4 7.200h2v1.500H4zM6.700 7.200h2v1.500h-2zM9.400 7.200h2v1.500h-2zM4 9.400h2v1H4zM6.700 9.400h2v1h-2zM9.400 9.400h2v1h-2z" fill="#ddd"/></svg>
        <label for="cmd" class="flex-grow-1 text-center text-nowrap">Select Object</label>
        <input id="cmd" value="eXit">
      </div>
      <div class="prompt-row d-flex align-items-center">
        <button type="button" class="tool">eXit</button><button type="button" class="tool">Pick</button><button type="button" class="tool border-0">Undo</button>
        <button type="button" class="tool arrow" aria-label="Previous"><svg width="5" height="7"><path d="M5 0v7L0 3.500z" fill="#777"/></svg></button><button type="button" class="tool arrow" aria-label="Next"><svg width="5" height="7"><path d="M0 0v7l5-3.500z" fill="#777"/></svg></button>
      </div>
    </form>
  </div>

  <nav class="layouts d-flex align-items-start">
    <button class="tool w11" aria-label="First layout"><svg width="7" height="11" viewBox="0 0 7 11"><path d="M1 3h1v5H1zM6 3v5L2.500 5.500z" fill="#eee"/></svg></button>
    <button class="tool w11" aria-label="Previous layout"><svg width="7" height="11" viewBox="0 0 7 11"><path d="M5 3v5L1.500 5.500z" fill="#eee"/></svg></button>
    <button class="tool w11" aria-label="Next layout"><svg width="7" height="11" viewBox="0 0 7 11"><path d="M2 3v5l3.500-2.500z" fill="#eee"/></svg></button>
    <button class="tool w11" aria-label="Last layout"><svg width="7" height="11" viewBox="0 0 7 11"><path d="M5 3h1v5H5zM1 3v5l3.500-2.500z" fill="#eee"/></svg></button>
    <a class="nav-link active" href="#">Model</a>
    <a class="nav-link" href="#">A2-ARCH</a><span>/</span>
    <a class="nav-link" href="#">Foundation</a><span>/</span>
    <a class="nav-link" href="#">First Floor Layout</a><span>/</span>
    <a class="nav-link" href="#">Second Floor Layout</a><span>/</span>
    <a class="nav-link" href="#">Plumbing Layout</a><span>/</span>
    <a class="nav-link px-1" href="#" aria-label="Add layout">+</a><span>/</span>
  </nav>
</main>

<footer class="status d-flex align-items-center">
  <div class="coords">89678.74, 16955.21, 0</div>
  <button class="tool st" aria-label="Snap"><svg width="10" height="10" viewBox="0 0 10 10"><path d="M1.500 1v8M3.500 1v8M5.500 1v8M7.500 1v8M1 1.500h8M1 3.500h8M1 5.500h8M1 7.500h7" stroke="#ccc" stroke-width=".8"/><path d="M8 8h1.500v1.500H8z" fill="#4a90f0"/></svg></button>
  <button class="tool st" aria-label="Grid"><svg width="10" height="10" viewBox="0 0 10 10"><path d="M2.500 1v8M5.500 1v8M8 1v8M1 2.500h9M1 5.500h9M1 8h9" stroke="#ccc"/></svg></button>
  <button class="tool st on" aria-label="Ortho"><svg width="10" height="10" viewBox="0 0 10 10"><path d="M2 1v7.500h7M2 6h2.500v2.500" fill="none" stroke="#ddd"/></svg></button>
  <button class="tool st" aria-label="Polar"><svg width="10" height="10" viewBox="0 0 10 10"><path d="M8.500 5A3.800 3.800 0 1 1 6 1.700M5 5h4.500M5 5l4-4" fill="none" stroke="#ccc" stroke-width="1.200"/></svg></button>
  <button class="tool st on" aria-label="Object snap"><svg width="10" height="10" viewBox="0 0 10 10"><path d="M1.500 1.500h7v7h-7z" fill="none" stroke="#ccc"/><path d="M7 .5h2.500V3H7z" fill="#4a90f0"/></svg></button>
  <button class="tool st on" aria-label="Tracking"><svg width="10" height="10" viewBox="0 0 10 10"><path d="M8.500 1.500L1.500 8.500H9" fill="none" stroke="#ddd"/></svg></button>
  <button class="tool st" aria-label="Dynamic UCS"><svg width="10" height="10" viewBox="0 0 10 10"><path d="M4.500 1v8M0 4.500h9M6 6h3" stroke="#ddd" stroke-width="1.600"/></svg></button>
  <button class="tool st on" aria-label="Dynamic input"><svg width="10" height="10" viewBox="0 0 10 10"><path d="M3 0v6M0 3h6" stroke="#ddd"/><path d="M4 5h6v5H4z" fill="#ccc"/><path d="M5 6.500h4M5 8.500h4" stroke="#555" stroke-width=".8"/></svg></button>
  <button class="tool st" aria-label="Line weight"><svg width="10" height="10" viewBox="0 0 10 10"><path d="M0 2h10M0 8h10" stroke="#ccc" stroke-width="1.300"/><path d="M0 5h10" stroke="#6a8ad0" stroke-width="1.300"/></svg></button>
  <button class="tool st" aria-label="Cycling"><svg width="10" height="10" viewBox="0 0 10 10"><path d="M2 2l3-1" stroke="#666"/><path d="M4 1l5 5H7l1 3-1 .5L6 7 4 8z" fill="#ddd"/></svg></button>
  <button class="tool st" aria-label="Layers"><svg width="11" height="10" viewBox="0 0 11 10"><path d="M5 0l5 2.300L5 4.500 0 2.300zM0 4.500L5 7l5-2.500M0 7l5 2.500L8 8" fill="none" stroke="#ddd" stroke-width="1.300"/><path d="M8.500 7H11v2.500H8.500z" fill="#4a90f0"/></svg></button>
  <button class="tool st" aria-label="Quick view"><svg width="11" height="10" viewBox="0 0 11 10"><circle cx="5" cy="4.500" r="3.800" fill="#4a90f0" stroke="#bbb"/><path d="M3 3.500h4v2.500H3z" fill="#222"/><path d="M7.500 7.500L10 10" stroke="#ccc" stroke-width="1.500"/></svg></button>
  <button class="tool st on" aria-label="Model space"><svg width="10" height="10" viewBox="0 0 10 10"><path d="M3 1h7v5H3z" fill="#b7cdf2"/><path d="M0 4h7v5H0z" fill="#4a90f0"/></svg></button>
  <button class="tool st" aria-label="Annotation scale"><svg width="10" height="10" viewBox="0 0 10 10"><path d="M5 0l1 4 3.500 5L6 7.500V9H4V7.500L.5 9 4 4z" fill="#ddd"/></svg></button>
  <button class="tool">1:1<svg width="6" height="5"><use href="#chev"/></svg></button>
  <button class="tool st" aria-label="Annotation visibility"><svg width="11" height="10" viewBox="0 0 11 10"><path d="M5 0l1 4 3.500 5L6 7.500V9H4V7.500L.5 9 4 4z" fill="#ddd"/><circle cx="8.500" cy="2" r="1.700" fill="#f2a84a"/></svg></button>
  <button class="tool st" aria-label="Auto scale"><svg width="11" height="10" viewBox="0 0 11 10"><path d="M4 1l1 3 3.500 5L5 7.500V9H3.500V7.500L.5 9 3 4zM8 0v4M6.500 2h3" fill="#888" stroke="#888" stroke-width=".6"/></svg></button>
  <button class="tool st" aria-label="Transparency"><svg width="9" height="9" viewBox="0 0 9 9"><path d="M.5.500h8v8h-8z" fill="#ddd"/><path d="M1 1h2v2H1zM5 1h2v2H5zM3 3h2v2H3zM7 3h1v2H7zM1 5h2v2H1zM5 5h2v2H5zM3 7h2v1H3z" fill="#333"/></svg></button>
  <button class="tool st" aria-label="Properties"><svg width="8" height="9" viewBox="0 0 8 9"><path d="M.5 0h7v9h-7z" fill="#ccc"/><path d="M2 2h4M2 4.500h2.500M2 7h4" stroke="#555"/></svg></button>
  <button class="tool st" aria-label="Refresh"><svg width="10" height="10" viewBox="0 0 10 10"><path d="M8 2A4 4 0 1 0 9 5.500M5 5h3" fill="none" stroke="#ccc"/><circle cx="5" cy="5" r="1.300" fill="#ccc"/></svg></button>
  <button class="tool st ms-auto" aria-label="Settings"><svg width="9" height="9" viewBox="0 0 9 9"><circle cx="4.500" cy="4.500" r="2.500" fill="none" stroke="#e4e4e4" stroke-width="1.800"/><path d="M4.500 0v2M4.500 7v2M0 4.500h2M7 4.500h2M1.300 1.300l1 1M6.700 6.700l1 1M7.700 1.300l-1 1M2.300 6.700l-1 1" stroke="#e4e4e4" stroke-width="1.300"/></svg></button>
  <button class="tool st" aria-label="Unlock"><svg width="9" height="9" viewBox="0 0 9 9"><path d="M0 4h6v4.500H0z" fill="#4a90f0"/><path d="M5 4V2.500a1.500 1.500 0 0 1 3 0V4" fill="none" stroke="#4a90f0" stroke-width="1.200"/></svg></button>
  <button class="tool st" aria-label="Isolate"><svg width="8" height="9" viewBox="0 0 8 9"><path d="M4 0a2.800 2.800 0 0 1 1.500 5.300V8.500h-3V5.300A2.800 2.800 0 0 1 4 0z" fill="#4a90f0"/></svg></button>
  <button class="tool st" aria-label="Find"><svg width="10" height="9" viewBox="0 0 10 9"><path d="M0 0h7v6H0z" fill="#4a90f0"/><circle cx="6" cy="5" r="2.500" fill="#454545" stroke="#ccc"/><path d="M8 7l2 2" stroke="#ccc" stroke-width="1.300"/></svg></button>
  <button class="tool st" aria-label="Full screen"><svg width="9" height="9" viewBox="0 0 9 9"><path d="M.5.500h8v8h-8zM5 2h2v2M2 5v2h2" fill="none" stroke="#ccc"/></svg></button>
  <span class="ps-1 pe-1">GstarCAD</span>
</footer>
<script src="https://cdn.jsdelivr.net/npm/bootstrap@5.3.0/dist/js/bootstrap.bundle.min.js"></script>
</body>
</html>
